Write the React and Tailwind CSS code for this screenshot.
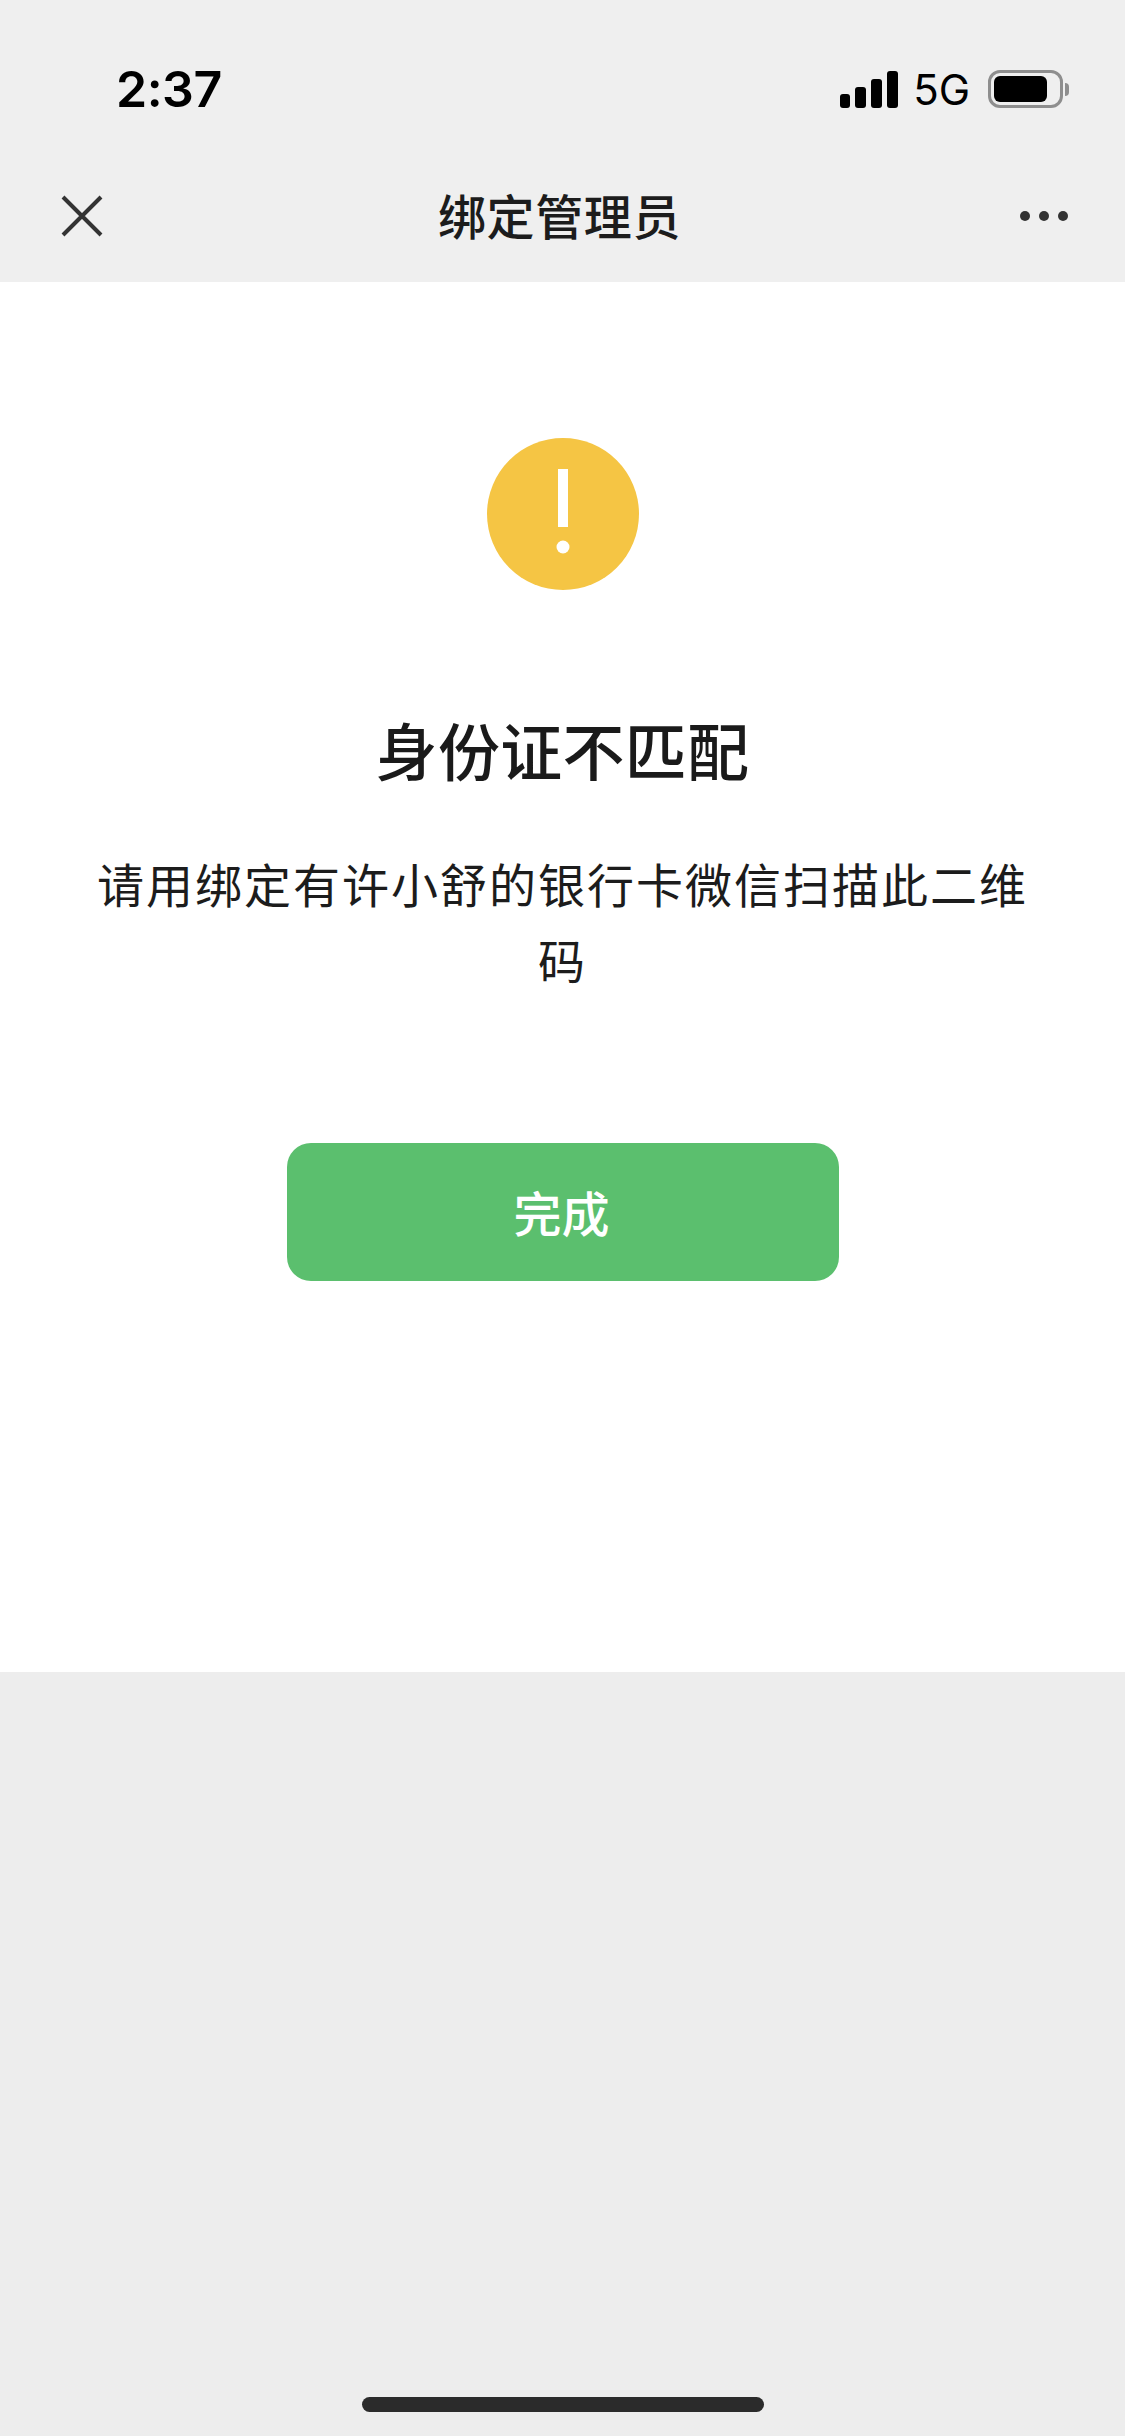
import React from 'react';

const cjk = { fontFamily: '"Noto Sans CJK SC", sans-serif' };

const StatusBar = () => (
  <div className="h-[150px] pl-[116px] pr-[56px] pt-[63px] flex justify-between items-start">
    <span className="text-[50px] leading-[52px] font-semibold text-black tracking-[-0.5px] font-['Inter',sans-serif]">2:37</span>
    <div className="flex items-center pt-[7px]">
      <div className="flex items-end gap-[5px] h-[37px]">
        <div className="w-[10px] h-[14px] rounded-[3px] bg-black" />
        <div className="w-[11px] h-[21px] rounded-[3px] bg-black" />
        <div className="w-[11px] h-[29px] rounded-[3px] bg-black" />
        <div className="w-[11px] h-[37px] rounded-[3px] bg-black" />
      </div>
      <span className="ml-[15px] text-[42px] leading-[37px] text-black font-['Inter',sans-serif]">5G</span>
      <div className="ml-[18px] w-[75px] h-[38px] rounded-[12px] border-[3px] border-[#8e8e8e] p-[3px] pr-[13px]">
        <div className="w-full h-full rounded-[6px] bg-black" />
      </div>
      <div className="ml-[2px] w-[4px] h-[13px] rounded-r-full bg-[#8e8e8e]" />
    </div>
  </div>
);

const NavBar = () => (
  <div className="h-[132px] flex items-center justify-between pl-[60px] pr-[57px] pb-[1px]">
    <svg width="44" height="44" viewBox="0 0 44 44" className="text-[#333333]">
      <path d="M3 3 L41 41 M41 3 L3 41" stroke="currentColor" strokeWidth="4" fill="none" />
    </svg>
    <h1 className="text-[48px] leading-[64px] -mt-[4px] mr-[5px] tracking-[0.6px] font-medium text-[#1c1c1c]" style={cjk}>绑定管理员</h1>
    <div className="flex items-center gap-[9px] w-[48px]">
      <div className="w-[10px] h-[10px] shrink-0 rounded-full bg-[#333333]" />
      <div className="w-[10px] h-[10px] shrink-0 rounded-full bg-[#333333]" />
      <div className="w-[10px] h-[10px] shrink-0 rounded-full bg-[#333333]" />
    </div>
  </div>
);

const WarningIcon = () => (
  <svg width="152" height="152" viewBox="0 0 152 152">
    <circle cx="76" cy="76" r="76" fill="#f5c544" />
    <rect x="71" y="31" width="10" height="58" fill="#ffffff" />
    <circle cx="76" cy="109" r="6.5" fill="#ffffff" />
  </svg>
);

export default function App() {
  return (
    <div className="w-[1125px] h-[2436px] flex flex-col bg-[#eeeeee] overflow-hidden">
      <div className="bg-[#efefef]">
        <StatusBar />
        <NavBar />
      </div>

      <main className="h-[1390px] bg-white flex flex-col items-center pt-[156px]">
        <WarningIcon />
        <h2 className="mt-[115px] text-[62px] leading-[88px] tracking-[0.3px] font-medium text-[#1a1a1a]" style={cjk}>身份证不匹配</h2>
        <p className="mt-[52px] w-[944px] text-center text-[47px] leading-[76px] tracking-[2px] text-[#1c1c1c]" style={cjk}>
          请用绑定有许小舒的银行卡微信扫描此二维码
        </p>
        <button className="mt-[146px] w-[552px] h-[138px] pb-[2px] pr-[2px] rounded-[24px] bg-[#5bbf6e] text-white text-[48px] font-medium" style={cjk}>
          完成
        </button>
      </main>

      <div className="flex-1 bg-[#ededed] flex flex-col justify-end items-center pb-[24px]">
        <div className="w-[402px] h-[15px] rounded-full bg-[#2b2b2b]" />
      </div>
    </div>
  );
}
